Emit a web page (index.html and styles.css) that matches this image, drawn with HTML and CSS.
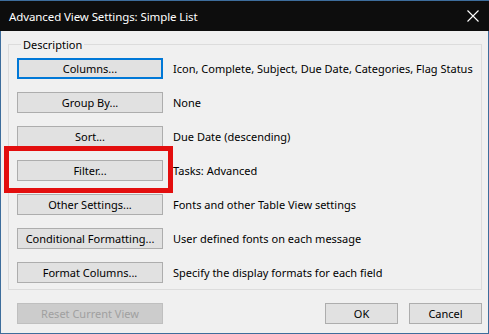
FILE: index.html
```
<!DOCTYPE html>
<html lang="en">
<head>
    <meta charset="UTF-8">
    <meta name="viewport" content="width=device-width, initial-scale=1.0">
    <title>Advanced View Settings: Simple List</title>
    <link rel="stylesheet" href="styles.css">
</head>
<body>
    <div class="window">
        <div class="titlebar">
            <span class="title">Advanced View Settings: Simple List</span>
            <svg class="close" width="12" height="12" viewBox="0 0 12 12">
                <path d="M0.5 0.5 L11.5 11.5 M11.5 0.5 L0.5 11.5" stroke="#fff" stroke-width="1.1" fill="none"/>
            </svg>
        </div>
        <div class="content">
            <fieldset class="group">
                <legend>Description</legend>
                <div class="row">
                    <button class="btn focused">Columns...</button>
                    <span class="desc">Icon, Complete, Subject, Due Date, Categories, Flag Status</span>
                </div>
                <div class="row">
                    <button class="btn">Group By...</button>
                    <span class="desc">None</span>
                </div>
                <div class="row">
                    <button class="btn">Sort...</button>
                    <span class="desc">Due Date (descending)</span>
                </div>
                <div class="row">
                    <button class="btn">Filter...</button>
                    <span class="desc">Tasks: Advanced</span>
                </div>
                <div class="row">
                    <button class="btn">Other Settings...</button>
                    <span class="desc">Fonts and other Table View settings</span>
                </div>
                <div class="row">
                    <button class="btn">Conditional Formatting...</button>
                    <span class="desc">User defined fonts on each message</span>
                </div>
                <div class="row">
                    <button class="btn">Format Columns...</button>
                    <span class="desc">Specify the display formats for each field</span>
                </div>
            </fieldset>
            <div class="footer">
                <button class="btn disabled">Reset Current View</button>
                <div class="actions">
                    <button class="btn small">OK</button>
                    <button class="btn small">Cancel</button>
                </div>
            </div>
            <div class="highlight"></div>
        </div>
    </div>
</body>
</html>
```
FILE: styles.css
```
* {
    box-sizing: border-box;
}
body {
    margin: 0;
    padding: 0;
    font-family: "Noto Sans", "Open Sans", sans-serif;
    font-size: 11px;
    background-color: #f0f0f0;
}
.window {
    width: 489px;
    height: 334px;
    border: 1px solid #3d6d9c;
    border-top: none;
    background-color: #f0f0f0;
    display: flex;
    flex-direction: column;
}
.titlebar {
    height: 31px;
    background-color: #0d0d0d;
    color: #fff;
    display: flex;
    align-items: center;
    justify-content: space-between;
    padding: 0 10px 0 9px;
    margin: 0 -1px;
    border-top: 1px solid #3d6d9c;
}
.title {
    font-size: 11.5px;
    letter-spacing: -0.1px;
}
.close {
    display: block;
}
.content {
    position: relative;
    flex: 1;
    padding: 6px 6px 0 7px;
}
.group {
    margin: 0;
    min-width: 0;
    height: 253px;
    border: 1px solid #dcdcdc;
    padding: 6px 8px 0 8px;
    display: flex;
    flex-direction: column;
    gap: 13px;
}
.group legend {
    padding: 0 2px;
    margin-left: 4px;
    color: #000;
}
.row {
    display: flex;
    align-items: center;
    gap: 10px;
}
.btn {
    width: 146px;
    height: 21px;
    padding: 0;
    font-family: inherit;
    font-size: 11px;
    color: #000;
    background-color: #e1e1e1;
    border: 1px solid #adadad;
    flex-shrink: 0;
}
.btn.focused {
    border: 2px solid #0078d7;
}
.btn.disabled {
    color: #a0a0a0;
    background-color: #cccccc;
    border-color: #bfbfbf;
}
.btn.small {
    width: 73px;
}
.desc {
    color: #000;
    white-space: nowrap;
}
.footer {
    display: flex;
    justify-content: space-between;
    padding: 13px 0 0 9px;
}
.actions {
    display: flex;
    gap: 11px;
}
.highlight {
    position: absolute;
    left: 3px;
    top: 115px;
    width: 169px;
    height: 47px;
    border: 5px solid #e30e0e;
}
```
